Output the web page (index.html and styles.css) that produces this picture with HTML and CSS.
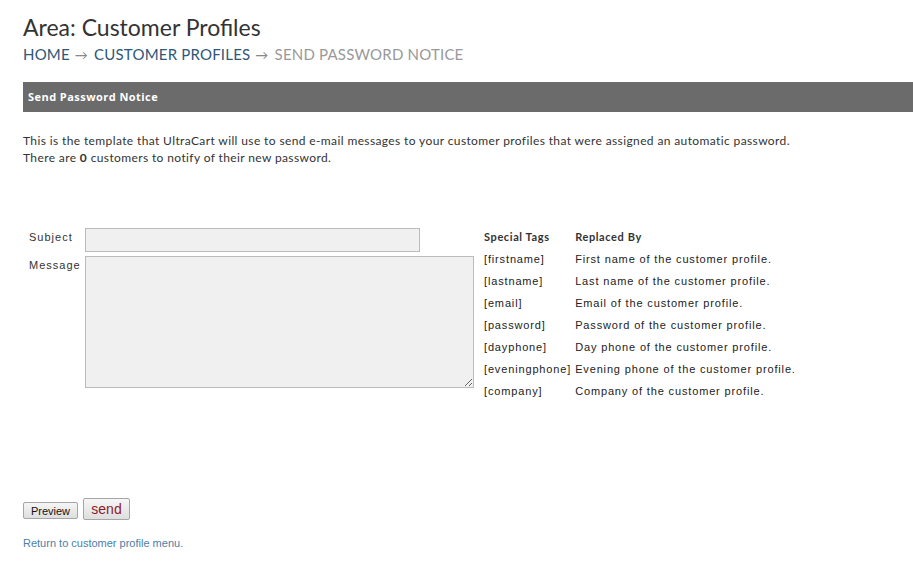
FILE: index.html
```html
<!DOCTYPE html>
<html>
<head>
<meta charset="utf-8">
<link rel="stylesheet" href="styles.css">
</head>
<body>
<div class="page">
  <h1 class="title">Area: Customer Profiles</h1>
  <div class="crumbs"><a class="crumb" href="#">Home</a><span class="arrow">→</span><a class="crumb" href="#">Customer Profiles</a><span class="arrow">→</span><span class="current">Send Password Notice</span></div>
  <div class="bar">Send Password Notice</div>
  <p class="intro">This is the template that UltraCart will use to send e-mail messages to your customer profiles that were assigned an automatic password.<br>There are <b>0</b> customers to notify of their new password.</p>
  <div class="main">
    <div class="form">
      <div class="row"><label class="lbl">Subject</label><input class="subject" type="text"></div>
      <div class="row"><label class="lbl">Message</label><textarea class="message"></textarea></div>
    </div>
    <table class="tags">
      <tr><th>Special Tags</th><th>Replaced By</th></tr>
      <tr><td>[firstname]</td><td>First name of the customer profile.</td></tr>
      <tr><td>[lastname]</td><td>Last name of the customer profile.</td></tr>
      <tr><td>[email]</td><td>Email of the customer profile.</td></tr>
      <tr><td>[password]</td><td>Password of the customer profile.</td></tr>
      <tr><td>[dayphone]</td><td>Day phone of the customer profile.</td></tr>
      <tr><td>[eveningphone]</td><td>Evening phone of the customer profile.</td></tr>
      <tr><td>[company]</td><td>Company of the customer profile.</td></tr>
    </table>
  </div>
  <div class="buttons"><button class="btn preview">Preview</button><button class="btn send">send</button></div>
  <a class="back" href="#">Return to customer profile menu.</a>
</div>
</body>
</html>
```
FILE: styles.css
```css
html, body { margin: 0; padding: 0; background: #fff; }
body { font-family: Lato, "Open Sans", sans-serif; color: #333; }
.page { padding: 12px 0 0 23px; }
.title { margin: 0; font-family: Lato, sans-serif; font-weight: 400; font-size: 23px; line-height: 30px; color: #333; }
.crumbs { margin-top: 2px; font-size: 15px; line-height: 20px; text-transform: uppercase; letter-spacing: 0.2px; }
.crumb { color: #2e5878; text-decoration: none; }
.arrow { color: #888; margin: 0 6px 0 5px; font-size: 13px; }
.current { color: #999; }
.bar { margin-top: 17px; height: 30px; line-height: 29px; background: #6b6b6b; color: #fff; font-family: "Open Sans", sans-serif; font-weight: 700; font-size: 11px; letter-spacing: 0.45px; padding-left: 5px; }
.intro { margin: 20px 0 0; font-size: 12px; line-height: 17px; letter-spacing: 0.38px; color: #333; }
.intro b { font-weight: 700; }
.main { display: flex; margin-top: 68px; align-items: flex-start; }
.form { display: flex; flex-direction: column; gap: 4px; margin-top: -6px; }
.row { display: flex; align-items: flex-start; }
.lbl { width: 56px; padding-left: 6px; padding-top: 3px; font-family: "Liberation Sans", Arial, sans-serif; font-size: 11px; letter-spacing: 1px; color: #333; }
.subject { width: 335px; height: 24px; box-sizing: border-box; border: 1px solid #bbb; background: #f0f0f0; margin: 0; padding: 0; }
.message { width: 389px; height: 132px; box-sizing: border-box; border: 1px solid #bbb; background: #f0f0f0; margin: 0; padding: 0; resize: both; }
.tags { border-collapse: collapse; margin-left: 8px; margin-top: -8px; }
.tags th, .tags td { text-align: left; padding: 0 2px 0 2px; height: 22px; line-height: 22px; vertical-align: middle; font-size: 11px; white-space: nowrap; color: #222; }
.tags th { font-family: Lato, sans-serif; font-weight: 700; letter-spacing: 0.6px; color: #333; }
.tags td { font-family: "Liberation Sans", Arial, sans-serif; letter-spacing: 0.85px; }
.buttons { display: flex; align-items: flex-start; gap: 5px; margin-top: 96px; }
.btn { margin: 0; border: 1px solid #a6a6a6; border-radius: 2px; background: linear-gradient(#f6f6f6, #dedede); font-family: "Liberation Sans", Arial, sans-serif; padding: 0; }
.preview { width: 55px; height: 17px; font-size: 11px; color: #111; margin-top: 4px; }
.send { width: 47px; height: 22px; font-size: 14px; color: #8b1a2b; }
.back { display: block; margin-top: 17px; font-family: "Liberation Sans", Arial, sans-serif; font-size: 11px; color: #4d7ea8; text-decoration: none; }
```
